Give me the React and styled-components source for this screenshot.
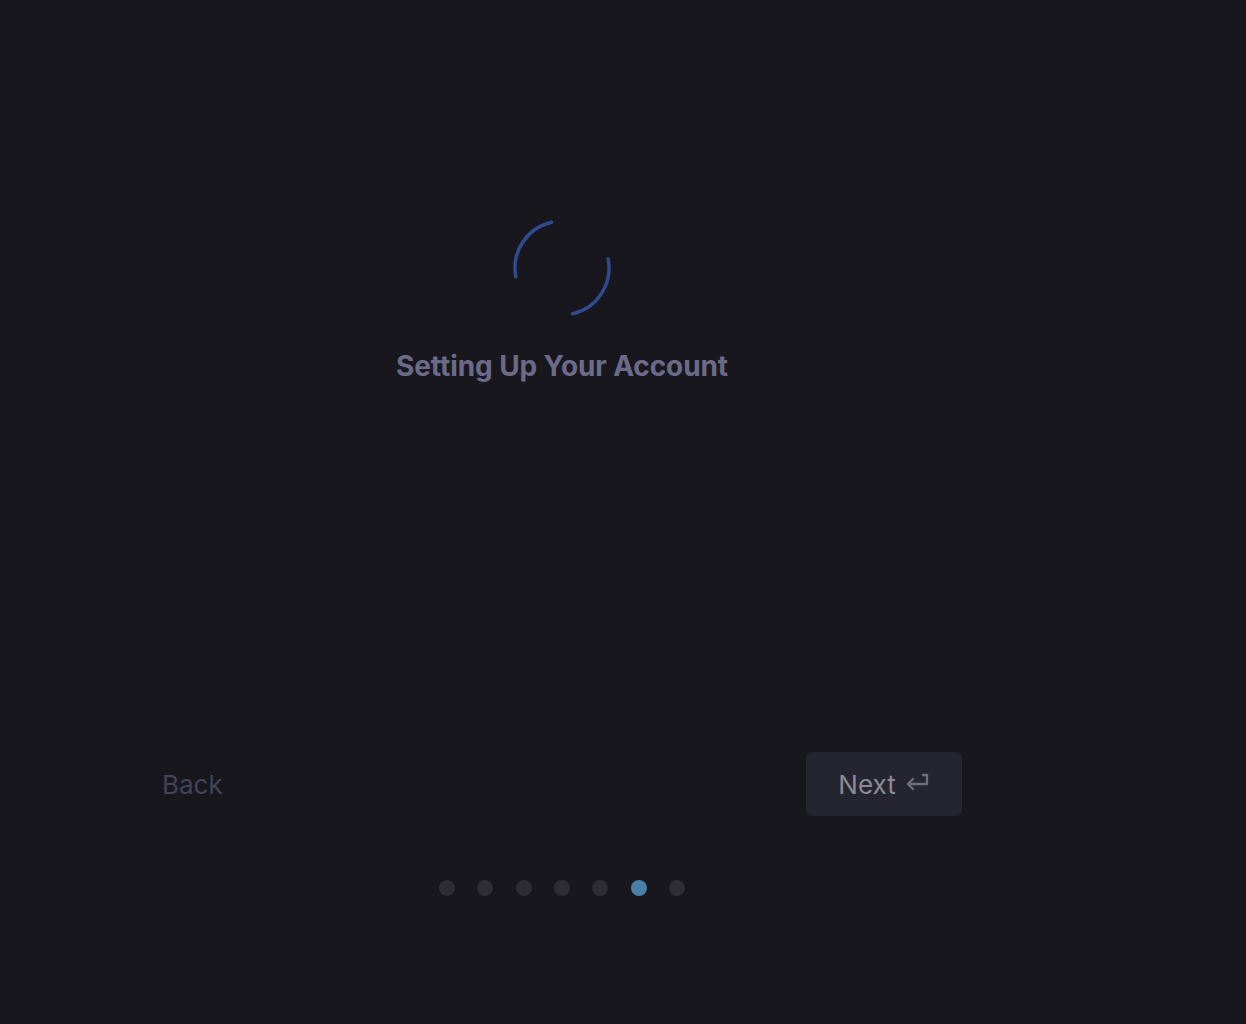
import styled, { createGlobalStyle } from "styled-components";

const GlobalStyle = createGlobalStyle`
  html, body {
    margin: 0;
    padding: 0;
    background: #18171e;
  }
  body {
    font-family: Inter, "Noto Sans", sans-serif;
  }
`;

const Page = styled.div`
  width: 1124px;
  height: 1024px;
  display: flex;
  flex-direction: column;
  align-items: center;
`;

const Content = styled.div`
  width: 800px;
  display: flex;
  flex-direction: column;
  align-items: center;
`;

const Spinner = styled.svg`
  margin-top: 218px;
  width: 100px;
  height: 100px;
  display: block;
`;

const Title = styled.h1`
  margin: 30px 0 0;
  font-size: 28px;
  font-weight: 700;
  color: #6b6b89;
  line-height: 36px;
  letter-spacing: -0.1px;
`;

const Footer = styled.div`
  margin-top: 368px;
  width: 100%;
  display: flex;
  justify-content: space-between;
  align-items: center;
`;

const BackButton = styled.button`
  background: none;
  border: none;
  padding: 0;
  font-family: inherit;
  font-size: 26px;
  color: #434257;
  cursor: pointer;
`;

const NextButton = styled.button`
  width: 156px;
  height: 64px;
  border: none;
  border-radius: 6px;
  background: #25252f;
  color: #8a8a94;
  font-family: inherit;
  font-size: 26px;
  display: flex;
  align-items: center;
  justify-content: center;
  gap: 10px;
  cursor: pointer;
`;

const Dots = styled.div`
  margin-top: 64px;
  display: flex;
  gap: 22.3px;
`;

const Dot = styled.span`
  width: 16px;
  height: 16px;
  border-radius: 50%;
  background: ${(p) => (p.$active ? "#4a80a8" : "#2e2d35")};
`;

function ReturnIcon() {
  return (
    <svg width="24" height="22" viewBox="0 0 24 22" fill="none">
      <path
        d="M17 2h4v9H3"
        stroke="#6e6e78"
        strokeWidth="2.4"
        strokeLinejoin="round"
        strokeLinecap="round"
      />
      <path
        d="M7 6l-5 5 5 5"
        stroke="#6e6e78"
        strokeWidth="2.4"
        strokeLinejoin="round"
        strokeLinecap="round"
      />
    </svg>
  );
}

export default function App() {
  const steps = [0, 1, 2, 3, 4, 5, 6];
  return (
    <>
      <GlobalStyle />
      <Page>
        <Content>
          <Spinner viewBox="0 0 100 100">
            <circle
              cx="50"
              cy="50"
              r="47"
              fill="none"
              stroke="#2f4b8e"
              strokeWidth="3.5"
              strokeLinecap="round"
              strokeDasharray="72 75.6"
              transform="rotate(-11 50 50)"
            />
          </Spinner>
          <Title>Setting Up Your Account</Title>
          <Footer>
            <BackButton>Back</BackButton>
            <NextButton>
              Next
              <ReturnIcon />
            </NextButton>
          </Footer>
          <Dots>
            {steps.map((s) => (
              <Dot key={s} $active={s === 5} />
            ))}
          </Dots>
        </Content>
      </Page>
    </>
  );
}
